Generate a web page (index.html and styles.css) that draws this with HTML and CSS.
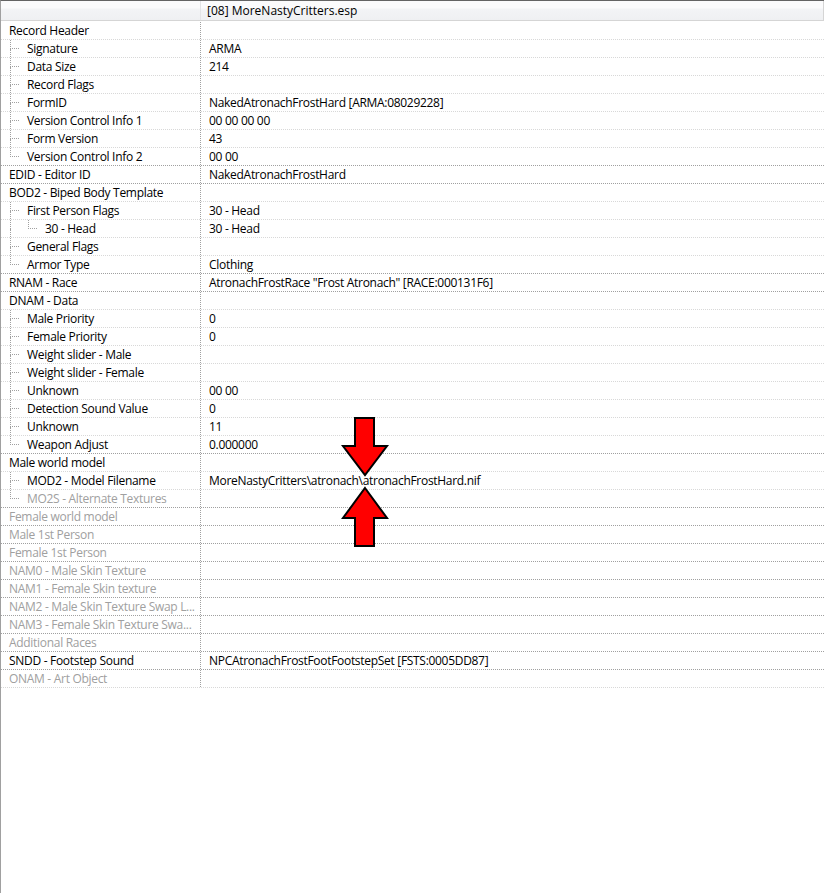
FILE: index.html
```html
<!DOCTYPE html>
<html lang="en">
<head>
  <meta charset="UTF-8">
  <meta name="viewport" content="width=device-width, initial-scale=1.0">
  <title>MoreNastyCritters.esp</title>
  <link rel="stylesheet" href="styles.css">
</head>
<body>
  <div class="view">
    <!-- column header -->
    <div class="header">
      <div class="hcell name"></div>
      <div class="hcell value">[08] MoreNastyCritters.esp</div>
    </div>

    <div class="rows">
      <div class="group">
        <div class="row"><div class="name"><span class="label">Record Header</span></div><div class="value"></div></div>
        <div class="row"><div class="name"><span class="slot"></span><span class="label">Signature</span></div><div class="value">ARMA</div></div>
        <div class="row"><div class="name"><span class="slot"></span><span class="label">Data Size</span></div><div class="value">214</div></div>
        <div class="row"><div class="name"><span class="slot"></span><span class="label">Record Flags</span></div><div class="value"></div></div>
        <div class="row"><div class="name"><span class="slot"></span><span class="label">FormID</span></div><div class="value">NakedAtronachFrostHard [ARMA:08029228]</div></div>
        <div class="row"><div class="name"><span class="slot"></span><span class="label">Version Control Info 1</span></div><div class="value">00 00 00 00</div></div>
        <div class="row"><div class="name"><span class="slot"></span><span class="label">Form Version</span></div><div class="value">43</div></div>
        <div class="row"><div class="name"><span class="slot elbow"></span><span class="label">Version Control Info 2</span></div><div class="value">00 00</div></div>
      </div>

      <div class="group">
        <div class="row"><div class="name"><span class="label">EDID - Editor ID</span></div><div class="value">NakedAtronachFrostHard</div></div>
      </div>

      <div class="group">
        <div class="row"><div class="name"><span class="label">BOD2 - Biped Body Template</span></div><div class="value"></div></div>
        <div class="row"><div class="name"><span class="slot"></span><span class="label">First Person Flags</span></div><div class="value">30 - Head</div></div>
        <div class="row"><div class="name"><span class="slot pipe"></span><span class="slot elbow"></span><span class="label">30 - Head</span></div><div class="value">30 - Head</div></div>
        <div class="row"><div class="name"><span class="slot"></span><span class="label">General Flags</span></div><div class="value"></div></div>
        <div class="row"><div class="name"><span class="slot elbow"></span><span class="label">Armor Type</span></div><div class="value">Clothing</div></div>
      </div>

      <div class="group">
        <div class="row"><div class="name"><span class="label">RNAM - Race</span></div><div class="value">AtronachFrostRace "Frost Atronach" [RACE:000131F6]</div></div>
      </div>

      <div class="group">
        <div class="row"><div class="name"><span class="label">DNAM - Data</span></div><div class="value"></div></div>
        <div class="row"><div class="name"><span class="slot"></span><span class="label">Male Priority</span></div><div class="value">0</div></div>
        <div class="row"><div class="name"><span class="slot"></span><span class="label">Female Priority</span></div><div class="value">0</div></div>
        <div class="row"><div class="name"><span class="slot"></span><span class="label">Weight slider - Male</span></div><div class="value"></div></div>
        <div class="row"><div class="name"><span class="slot"></span><span class="label">Weight slider - Female</span></div><div class="value"></div></div>
        <div class="row"><div class="name"><span class="slot"></span><span class="label">Unknown</span></div><div class="value">00 00</div></div>
        <div class="row"><div class="name"><span class="slot"></span><span class="label">Detection Sound Value</span></div><div class="value">0</div></div>
        <div class="row"><div class="name"><span class="slot"></span><span class="label">Unknown</span></div><div class="value">11</div></div>
        <div class="row"><div class="name"><span class="slot elbow"></span><span class="label">Weapon Adjust</span></div><div class="value">0.000000</div></div>
      </div>

      <div class="group">
        <div class="row"><div class="name"><span class="label">Male world model</span></div><div class="value"></div></div>
        <div class="row"><div class="name"><span class="slot"></span><span class="label">MOD2 - Model Filename</span></div><div class="value">MoreNastyCritters\atronach\atronachFrostHard.nif</div></div>
        <div class="row empty"><div class="name"><span class="slot elbow"></span><span class="label">MO2S - Alternate Textures</span></div><div class="value"></div></div>
      </div>

      <div class="group"><div class="row empty"><div class="name"><span class="label">Female world model</span></div><div class="value"></div></div></div>
      <div class="group"><div class="row empty"><div class="name"><span class="label">Male 1st Person</span></div><div class="value"></div></div></div>
      <div class="group"><div class="row empty"><div class="name"><span class="label">Female 1st Person</span></div><div class="value"></div></div></div>
      <div class="group"><div class="row empty"><div class="name"><span class="label">NAM0 - Male Skin Texture</span></div><div class="value"></div></div></div>
      <div class="group"><div class="row empty"><div class="name"><span class="label">NAM1 - Female Skin texture</span></div><div class="value"></div></div></div>
      <div class="group"><div class="row empty"><div class="name"><span class="label">NAM2 - Male Skin Texture Swap L...</span></div><div class="value"></div></div></div>
      <div class="group"><div class="row empty"><div class="name"><span class="label">NAM3 - Female Skin Texture Swa...</span></div><div class="value"></div></div></div>
      <div class="group"><div class="row empty"><div class="name"><span class="label">Additional Races</span></div><div class="value"></div></div></div>
      <div class="group"><div class="row"><div class="name"><span class="label">SNDD - Footstep Sound</span></div><div class="value">NPCAtronachFrostFootFootstepSet [FSTS:0005DD87]</div></div></div>
      <div class="group"><div class="row empty"><div class="name"><span class="label">ONAM - Art Object</span></div><div class="value"></div></div></div>
    </div>

    <!-- red markers around the path separator -->
    <svg class="arrows" width="60" height="140" viewBox="335 410 60 140">
      <polygon points="355,418 374,418 374,446 387,446 365,475 343,446 355,446" />
      <polygon points="365,488 387,518 374,518 374,546 355,546 355,518 343,518" />
    </svg>
  </div>
</body>
</html>
```

FILE: styles.css
```css
html, body {
  margin: 0;
  padding: 0;
  background-color: #fff;
}

body {
  font-family: 'Segoe UI', 'Open Sans', sans-serif;
  font-size: 12px;
  color: #000;
}

.view {
  position: relative;
  width: 823px;
  height: 892px;
  border-top: 1px solid #646464;
  border-left: 1px solid #a0a0a0;
}

.header {
  display: flex;
  height: 20px;
  box-sizing: border-box;
  border-bottom: 1px solid #d5d5d5;
  background: linear-gradient(to bottom, #fbfbfc 0, #fbfbfc 7px, #f3f4f6 8px, #eff0f2 100%);
}

.hcell {
  line-height: 19px;
  white-space: nowrap;
}

.hcell.name {
  width: 200px;
  flex: none;
  box-sizing: border-box;
  border-right: 1px solid #e3e4e6;
}

.hcell.value {
  flex: 1;
  padding-left: 6px;
  border-right: 1px solid #d5d5d5;
}

.rows {
  margin-top: 1px;
  letter-spacing: -0.3px;
}

.row {
  display: flex;
  height: 18px;
  box-sizing: border-box;
  border-bottom: 1px dotted #d8d8d8;
  line-height: 17px;
  white-space: nowrap;
}

.group:not(:last-child) > .row:last-child {
  border-bottom-color: #a0a0a0;
}

.row .name {
  display: flex;
  width: 200px;
  flex: none;
  box-sizing: border-box;
  border-right: 1px dotted #a0a0a0;
  overflow: hidden;
}

.row .value {
  flex: 1;
  padding-left: 8px;
}

.label {
  padding-left: 8px;
}

.row.empty .label {
  color: #a0a0a0;
}

/* tree guide lines */
.slot {
  display: flex;
  flex-direction: column;
  width: 18px;
  flex: none;
  box-sizing: border-box;
  padding-left: 9px;
}

.slot::before {
  content: "";
  width: 8px;
  height: 8px;
  border-left: 1px dotted #a0a0a0;
  border-bottom: 1px dotted #a0a0a0;
}

.slot::after {
  content: "";
  flex: 1;
  border-left: 1px dotted #a0a0a0;
}

.slot.elbow::after {
  border-left-color: transparent;
}

.slot.pipe::before {
  height: 9px;
  border-bottom: none;
}

.arrows {
  position: absolute;
  left: 334px;
  top: 409px;
  pointer-events: none;
}

.arrows polygon {
  fill: #ff0000;
  stroke: #000;
  stroke-width: 2;
  stroke-linejoin: miter;
}
```
